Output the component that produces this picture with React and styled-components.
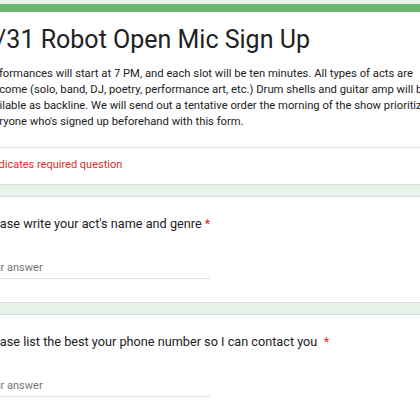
import React from "react";
import styled, { createGlobalStyle } from "styled-components";

const Global = createGlobalStyle`
  html, body { margin: 0; padding: 0; }
  body {
    background: #e8f4ea;
    font-family: Roboto, "Noto Sans", Arial, sans-serif;
    color: #202124;
    overflow: hidden;
  }
`;

const Page = styled.div`
  display: flex;
  flex-direction: column;
  gap: 11px;
  padding-top: 4px;
  margin-left: -43px;
  width: 506px;
`;

const Card = styled.div`
  background: #ffffff;
  border: 1px solid #dadce0;
  border-top: ${(p) => (p.$accent ? "8px solid #6ab970" : "1px solid #dadce0")};
  border-radius: 8px;
  box-sizing: border-box;
`;

const HeaderTop = styled.div`
  padding: 12px 24px 17px;
  border-bottom: 1px solid #e0e0e0;
`;

const Title = styled.h1`
  margin: 0 0 10px;
  font-size: 25px;
  font-weight: 400;
  line-height: 32px;
  color: #202124;
`;

const Description = styled.p`
  margin: 0;
  font-size: 11.25px;
  line-height: 16px;
  color: #202124;
  white-space: nowrap;
`;

const Required = styled.div`
  padding: 9px 24px 11px;
  font-size: 11px;
  line-height: 16px;
  color: #d93025;
`;

const QuestionBody = styled.div`
  padding: 18px 24px 23px;
  display: flex;
  flex-direction: column;
  gap: 28px;
`;

const QuestionTitle = styled.div`
  font-size: 12.7px;
  line-height: 18px;
  color: #202124;
  white-space: pre;
`;

const Star = styled.span`
  color: #d93025;
`;

const Answer = styled.div`
  width: 50%;
  font-size: 11px;
  line-height: 14px;
  color: #70757a;
  padding-bottom: 3px;
  border-bottom: 1px solid #e0e0e0;
`;

const descriptionLines = [
  "Performances will start at 7 PM, and each slot will be ten minutes. All types of acts are",
  "welcome (solo, band, DJ, poetry, performance art, etc.) Drum shells and guitar amp will be",
  "available as backline. We will send out a tentative order the morning of the show prioritizing",
  "everyone who's signed up beforehand with this form.",
];

const questions = [
  { text: "Please write your act's name and genre", gap: " " },
  { text: "Please list the best your phone number so I can contact you", gap: "  " },
];

export default function App() {
  return (
    <>
      <Global />
      <Page>
        <Card $accent>
          <HeaderTop>
            <Title>3/31 Robot Open Mic Sign Up</Title>
            <Description>
              {descriptionLines.map((line, i) => (
                <React.Fragment key={i}>
                  {line}
                  {i < descriptionLines.length - 1 && <br />}
                </React.Fragment>
              ))}
            </Description>
          </HeaderTop>
          <Required>* Indicates required question</Required>
        </Card>
        {questions.map((q) => (
          <Card key={q.text}>
            <QuestionBody>
              <QuestionTitle>
                {q.text}
                {q.gap}
                <Star>*</Star>
              </QuestionTitle>
              <Answer>Your answer</Answer>
            </QuestionBody>
          </Card>
        ))}
      </Page>
    </>
  );
}
